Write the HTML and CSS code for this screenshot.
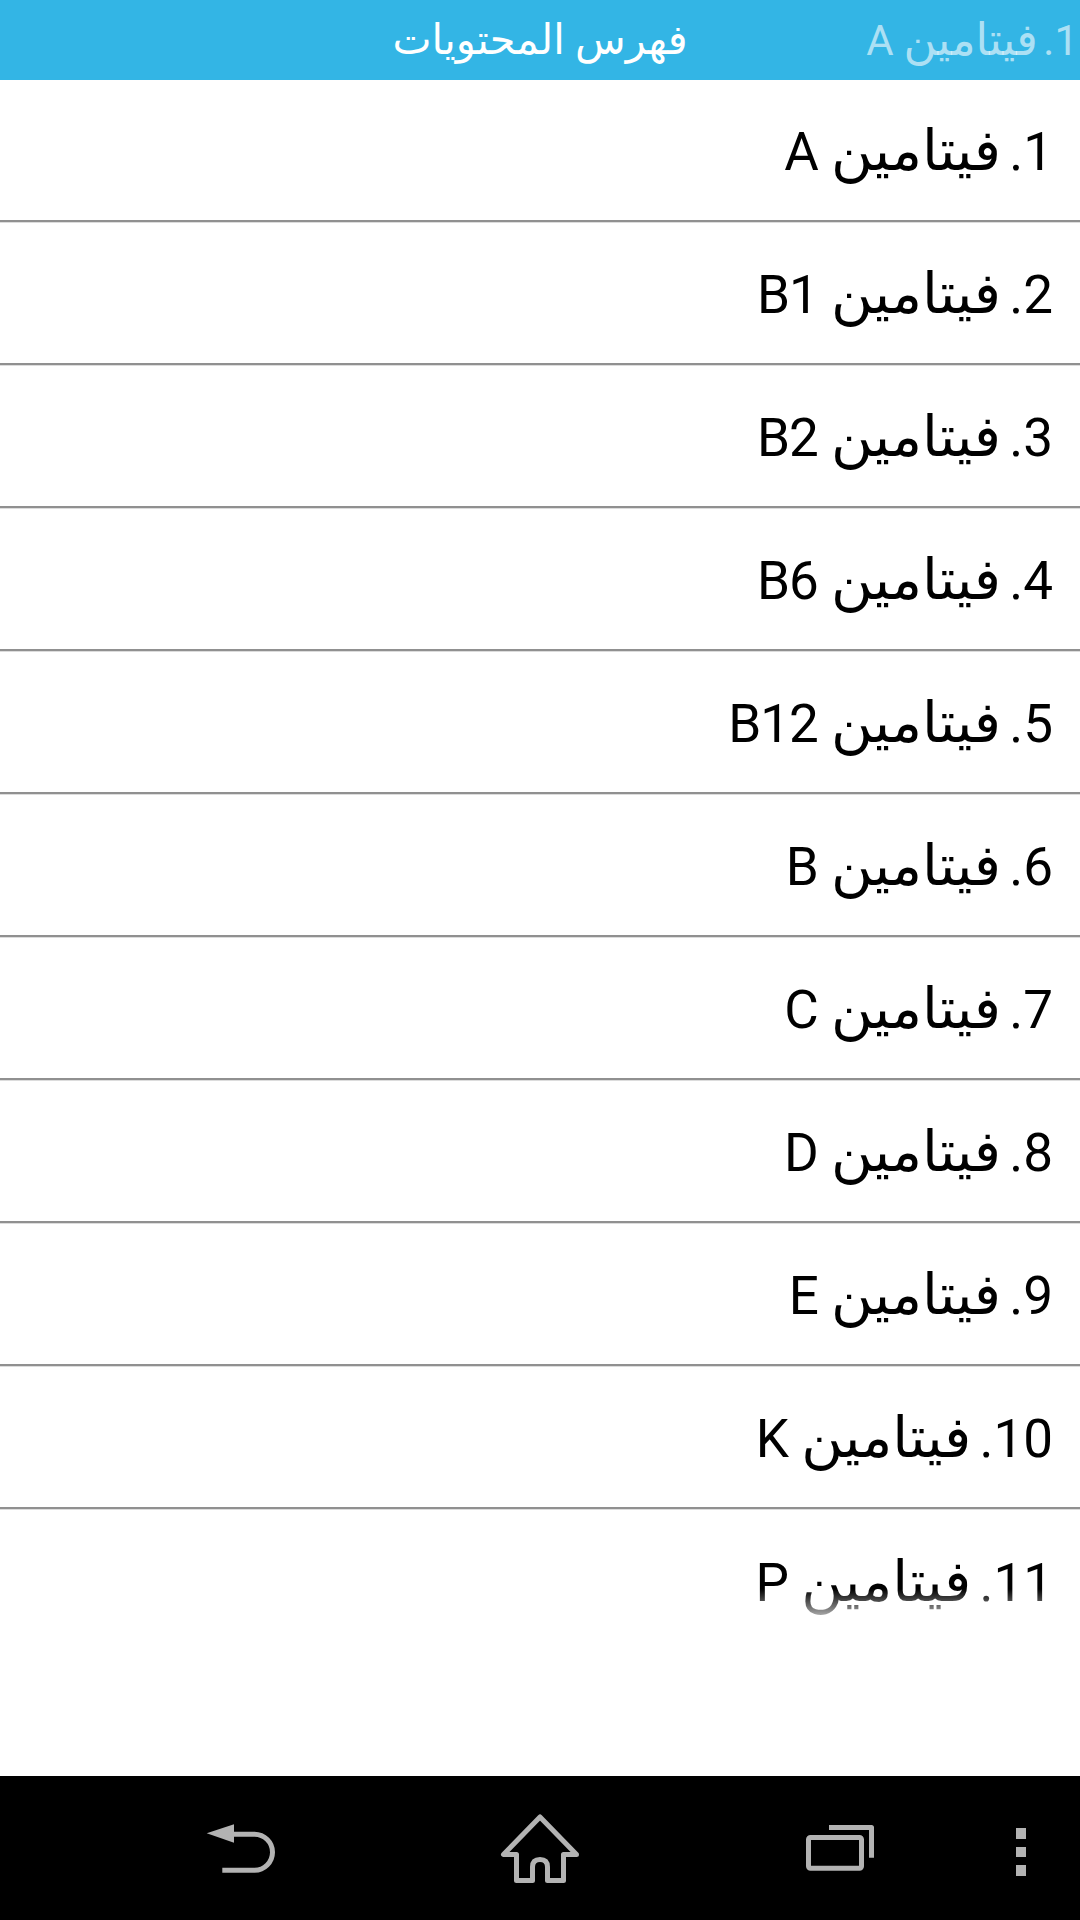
FILE: index.html
```html
<!DOCTYPE html>
<html lang="ar" dir="rtl">
<head>
<meta charset="utf-8">
<title>فهرس المحتويات</title>
<link rel="stylesheet" href="styles.css">
</head>
<body>
<div class="screen">
  <header class="strip">
    <span class="strip-side"></span>
    <span class="strip-title">فهرس المحتويات</span>
    <span class="strip-next"><span class="lat">1.</span> <span class="ar">فيتامين</span> <span class="lat">A</span></span>
  </header>
  <main class="list">
    <div class="row"><p class="label"><span class="lat">1.</span> <span class="ar">فيتامين</span> <span class="lat">A</span></p></div>
    <div class="row"><p class="label"><span class="lat">2.</span> <span class="ar">فيتامين</span> <span class="lat">B1</span></p></div>
    <div class="row"><p class="label"><span class="lat">3.</span> <span class="ar">فيتامين</span> <span class="lat">B2</span></p></div>
    <div class="row"><p class="label"><span class="lat">4.</span> <span class="ar">فيتامين</span> <span class="lat">B6</span></p></div>
    <div class="row"><p class="label"><span class="lat">5.</span> <span class="ar">فيتامين</span> <span class="lat">B12</span></p></div>
    <div class="row"><p class="label"><span class="lat">6.</span> <span class="ar">فيتامين</span> <span class="lat">B</span></p></div>
    <div class="row"><p class="label"><span class="lat">7.</span> <span class="ar">فيتامين</span> <span class="lat">C</span></p></div>
    <div class="row"><p class="label"><span class="lat">8.</span> <span class="ar">فيتامين</span> <span class="lat">D</span></p></div>
    <div class="row"><p class="label"><span class="lat">9.</span> <span class="ar">فيتامين</span> <span class="lat">E</span></p></div>
    <div class="row"><p class="label"><span class="lat">10.</span> <span class="ar">فيتامين</span> <span class="lat">K</span></p></div>
    <div class="row last"><p class="label"><span class="lat">11.</span> <span class="ar">فيتامين</span> <span class="lat">P</span></p></div>
    <div class="fade"></div>
  </main>
  <nav class="navbar" dir="ltr">
    <svg class="ico ico-back" viewBox="0 0 70 50" aria-label="back">
      <path class="fill" d="M0.7 9.3 L28 0.3 V18.7 Z"/>
      <path class="line" d="M27 10.2 H48.5 A18 18 0 0 1 48.5 46.2 H16.3"/>
    </svg>
    <svg class="ico ico-home" viewBox="0 0 78 72" aria-label="home">
      <path class="line" d="M39 3 L2.5 40.5 H15.5 V66.5 H31.5 V53 C31.5 48 34 45.5 39 45.5 C44 45.5 46.5 48 46.5 53 V66.5 H62.5 V40.5 H75.5 Z"/>
    </svg>
    <svg class="ico ico-recent" viewBox="0 0 68 46" aria-label="recents">
      <rect class="line" x="2.5" y="12.5" width="53" height="30.7" rx="2"/>
      <path class="line" d="M23 2.5 H65.5 V32.7"/>
    </svg>
    <div class="dots"><i></i><i></i><i></i></div>
  </nav>
</div>
</body>
</html>
```
FILE: styles.css
```css
* { box-sizing: border-box; }
html, body { margin: 0; padding: 0; }
body { background: #fff; font-family: Roboto, "DejaVu Sans", sans-serif; }
.screen { width: 1080px; height: 1920px; display: flex; flex-direction: column; overflow: hidden; }

.strip {
  height: 80px; flex: none; background: #33b5e5; color: #fff;
  display: grid; grid-template-columns: 1fr auto 1fr; align-items: center;
  font-size: 42px; line-height: 76px; white-space: nowrap; overflow: hidden;
}
.strip-title { font-size: 41.5px; }
.strip-next { order: -1; justify-self: start; padding-right: 2px; color: rgba(255,255,255,.6); }
.strip-next .ar { font-size: 45px; margin-right: -5px; }
.strip-next .lat { letter-spacing: -.6px; }
.strip-side { order: 1; }

.list { flex: 1; position: relative; overflow: hidden; margin-top: -1px; }
.row {
  height: 143px; padding: 2px 27px 0 0; display: flex; align-items: center;
  font-size: 53px; color: #000; border-bottom: 2px solid #909090;
  box-shadow: 0 1px 0 #dcdcdc;
}
.row.last { border-bottom: 0; box-shadow: none; }
.label { margin: 0; }
.ar { font-size: 57px; margin-right: -5px; }
.lat { letter-spacing: -1px; }
.fade {
  position: absolute; left: 0; right: 0; top: 1510px; height: 40px;
  background: linear-gradient(to bottom, rgba(255,255,255,0), #fff);
}

.navbar {
  height: 144px; flex: none; background: #000; display: flex; align-items: flex-start;
  padding-left: 206px; gap: 225px;
}
.ico { display: block; overflow: visible; }
.ico-back { width: 70px; height: 50px; margin-top: 48px; }
.ico-home { width: 78px; height: 72px; margin-top: 38px; }
.ico-recent { width: 68px; height: 46px; margin: 49px 0 0 2px; }
.fill { fill: #b3b3b3; }
.line { fill: none; stroke: #b3b3b3; stroke-width: 5; stroke-linejoin: round; }
.dots { margin: 52px 0 0 -83px; width: 10px; display: flex; flex-direction: column; gap: 8px; }
.dots i { display: block; height: 10.5px; background: #b3b3b3; }
```
